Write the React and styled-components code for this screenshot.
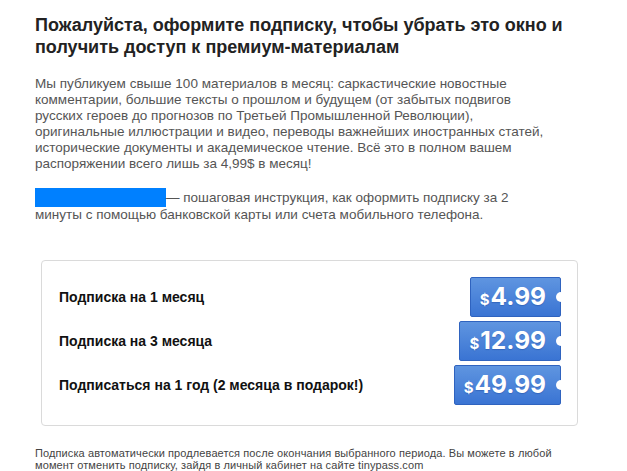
import React from "react";
import styled, { createGlobalStyle } from "styled-components";

const GlobalStyle = createGlobalStyle`
  html, body {
    margin: 0;
    padding: 0;
    background: #fff;
  }
  body {
    font-family: "Liberation Sans", Arial, sans-serif;
  }
`;

const Page = styled.div`
  width: 627px;
  padding: 14px 0 0 35px;
  box-sizing: border-box;
`;

const Title = styled.h1`
  margin: 0;
  font-size: 18px;
  line-height: 22px;
  font-weight: bold;
  color: #222;
`;

const Text = styled.p`
  margin: ${(p) => p.$top || 0}px 0 0;
  font-size: 13.5px;
  line-height: 16px;
  color: #555;
`;

const Hidden = styled.span`
  display: inline-block;
  width: 131px;
  height: 19px;
  vertical-align: -5px;
  background: #0080ff;
`;

const Card = styled.div`
  margin: 37px 0 0 6px;
  width: 537px;
  height: 166px;
  box-sizing: border-box;
  border: 1px solid #dadada;
  border-radius: 4px;
  padding: 16px 16px 0 17px;
  display: flex;
  flex-direction: column;
  gap: 4px;
`;

const Row = styled.div`
  display: flex;
  align-items: center;
  justify-content: space-between;
  height: 40px;
`;

const Label = styled.span`
  font-size: 14px;
  font-weight: bold;
  color: #111;
`;

const Price = styled.button`
  position: relative;
  height: 40px;
  padding: 3px 14px 0 9px;
  border: 1px solid #2f63bf;
  border-radius: 2px;
  background: linear-gradient(#5f95e0, #3a74d3);
  color: #fff;
  font-family: Inter, "Open Sans", sans-serif;
  font-weight: 700;
  display: flex;
  align-items: baseline;
  justify-content: center;
  cursor: pointer;
  text-shadow: 0 1px 1px rgba(20, 60, 140, 0.35);

  &::after {
    content: "";
    position: absolute;
    right: -6px;
    top: 50%;
    width: 10px;
    height: 10px;
    margin-top: -5px;
    border-radius: 50%;
    background: #fff;
  }
`;

const Dollar = styled.span`
  font-size: 15px;
  margin-right: 1px;
`;

const Amount = styled.span`
  font-size: 24.5px;
`;

const Footnote = styled.p`
  margin: 21px 0 0;
  font-size: 11px;
  line-height: 12px;
  color: #444;
  letter-spacing: 0.1px;
`;

const plans = [
  { label: "Подписка на 1 месяц", price: "4.99" },
  { label: "Подписка на 3 месяца", price: "12.99" },
  { label: "Подписаться на 1 год (2 месяца в подарок!)", price: "49.99" },
];

export default function App() {
  return (
    <Page>
      <GlobalStyle />
      <Title>
        Пожалуйста, оформите подписку, чтобы убрать это окно и<br />
        получить доступ к премиум-материалам
      </Title>
      <Text $top={18}>
        Мы публикуем свыше 100 материалов в месяц: саркастические новостные<br />
        комментарии, большие тексты о прошлом и будущем (от забытых подвигов<br />
        русских героев до прогнозов по Третьей Промышленной Революции),<br />
        оригинальные иллюстрации и видео, переводы важнейших иностранных статей,<br />
        исторические документы и академическое чтение. Всё это в полном вашем<br />
        распоряжении всего лишь за 4,99$ в месяц!
      </Text>
      <Text $top={16}>
        <Hidden />— пошаговая инструкция, как оформить подписку за 2<br />
        минуты с помощью банковской карты или счета мобильного телефона.
      </Text>
      <Card>
        {plans.map((p) => (
          <Row key={p.price}>
            <Label>{p.label}</Label>
            <Price>
              <Dollar>$</Dollar>
              <Amount>{p.price}</Amount>
            </Price>
          </Row>
        ))}
      </Card>
      <Footnote>
        Подписка автоматически продлевается после окончания выбранного периода. Вы можете в любой<br />
        момент отменить подписку, зайдя в личный кабинет на сайте tinypass.com
      </Footnote>
    </Page>
  );
}
